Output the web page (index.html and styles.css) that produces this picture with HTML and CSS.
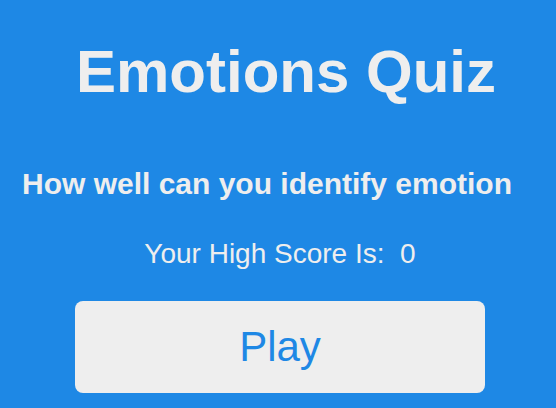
FILE: index.html
```html
<!DOCTYPE html>
<html>
<head>
<meta charset="utf-8">
<link rel="stylesheet" href="styles.css">
</head>
<body>
<main class="screen">
  <h1 class="title">Emotions Quiz</h1>
  <p class="subtitle">How well can you identify emotion</p>
  <p class="score">Your High Score Is:&nbsp; 0</p>
  <button class="play">Play</button>
</main>
</body>
</html>
```
FILE: styles.css
```css
html, body {
  margin: 0;
  padding: 0;
  background: #1e88e5;
}
.screen {
  width: 556px;
  height: 408px;
  overflow: hidden;
  font-family: "Liberation Sans", Arial, sans-serif;
  color: #eeeeee;
  display: flex;
  flex-direction: column;
  align-items: center;
}
.title {
  margin: 36px 0 0 16px;
  font-size: 60px;
  font-weight: bold;
  line-height: 72px;
}
.subtitle {
  margin: 58px 0 0 -22px;
  font-size: 30px;
  font-weight: bold;
  line-height: 36px;
  white-space: nowrap;
}
.score {
  margin: 36px 0 0 4px;
  font-size: 28px;
  line-height: 32px;
  white-space: nowrap;
}
.play {
  flex: none;
  margin: 31px 0 0 4px;
  width: 410px;
  height: 92px;
  border: none;
  border-radius: 8px;
  background: #eeeeee;
  color: #1e88e5;
  font-family: "Liberation Sans", Arial, sans-serif;
  font-size: 42px;
  padding: 0;
}
```
